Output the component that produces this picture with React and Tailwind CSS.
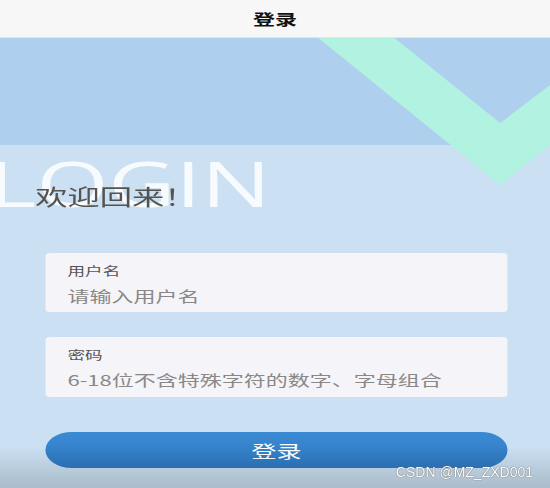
import React from "react";

export default function App() {
  return (
    <div className="relative w-[550px] h-[488px] overflow-hidden bg-[#cbe0f2]">
      <div
        className="relative w-[375px] h-[488px] origin-left scale-x-[1.46667] flex flex-col bg-[#cbe0f2]"
        style={{ fontFamily: '"Noto Sans CJK SC", "Noto Sans", sans-serif' }}
      >
        <header className="h-[38px] shrink-0 flex items-center justify-center bg-[#f7f7f7] border-b border-[#dbe6f0]">
          <span className="text-[15px] font-bold text-[#111] leading-none">登录</span>
        </header>

        <main className="relative flex-1 flex flex-col">
          <div className="h-[107px] shrink-0 bg-[#aecfee]" />

          <svg
            className="absolute left-0 top-0"
            width="375"
            height="150"
            viewBox="0 0 375 150"
          >
            <polygon
              points="217,0 269,0 341,85 375,47 375,107 341,147"
              fill="#b1f2e0"
            />
          </svg>

          <div
            className="absolute left-[-8px] top-[113px] text-[63px] leading-none font-normal text-white/85 select-none"
            style={{ fontFamily: '"Open Sans", sans-serif' }}
          >
            LOGIN
          </div>

          <h1 className="relative mt-[35px] pl-[24px] text-[22px] leading-[30px] font-normal text-[#55534f]">
            欢迎回来！
          </h1>

          <form className="relative mt-[43px] pl-[31px] pr-[29px] flex flex-col">
            <div className="h-[59px] rounded-[3px] bg-[#f4f4f9] px-[15px] pt-[10px] flex flex-col">
              <span className="text-[12px] leading-[16px] text-[#555]">用户名</span>
              <span className="mt-[7px] text-[15px] leading-[20px] text-[#8a8786]">请输入用户名</span>
            </div>
            <div className="mt-[25px] h-[60px] rounded-[3px] bg-[#f4f4f9] px-[15px] pt-[10px] flex flex-col">
              <span className="text-[12px] leading-[16px] text-[#555]">密码</span>
              <span className="mt-[7px] text-[15px] leading-[20px] text-[#8a8786]">6-18位不含特殊字符的数字、字母组合</span>
            </div>
            <button
              type="button"
              className="mt-[35px] h-[36px] rounded-full bg-gradient-to-b from-[#3a8bd3] to-[#3079c2] text-white text-[17px] leading-none flex items-center justify-center"
            >
              登录
            </button>
          </form>
        </main>
      </div>

      <div className="pointer-events-none absolute left-0 right-0 bottom-0 h-[42px] bg-gradient-to-b from-black/0 to-black/[0.16]" />

      <div
        className="pointer-events-none absolute right-[17px] bottom-[9px] text-[14px] leading-none text-white"
        style={{ fontFamily: '"Liberation Sans", Arial, sans-serif', textShadow: "0 0 1px #666, 0 0 1px #666" }}
      >
        CSDN @MZ_ZXD001
      </div>
    </div>
  );
}
